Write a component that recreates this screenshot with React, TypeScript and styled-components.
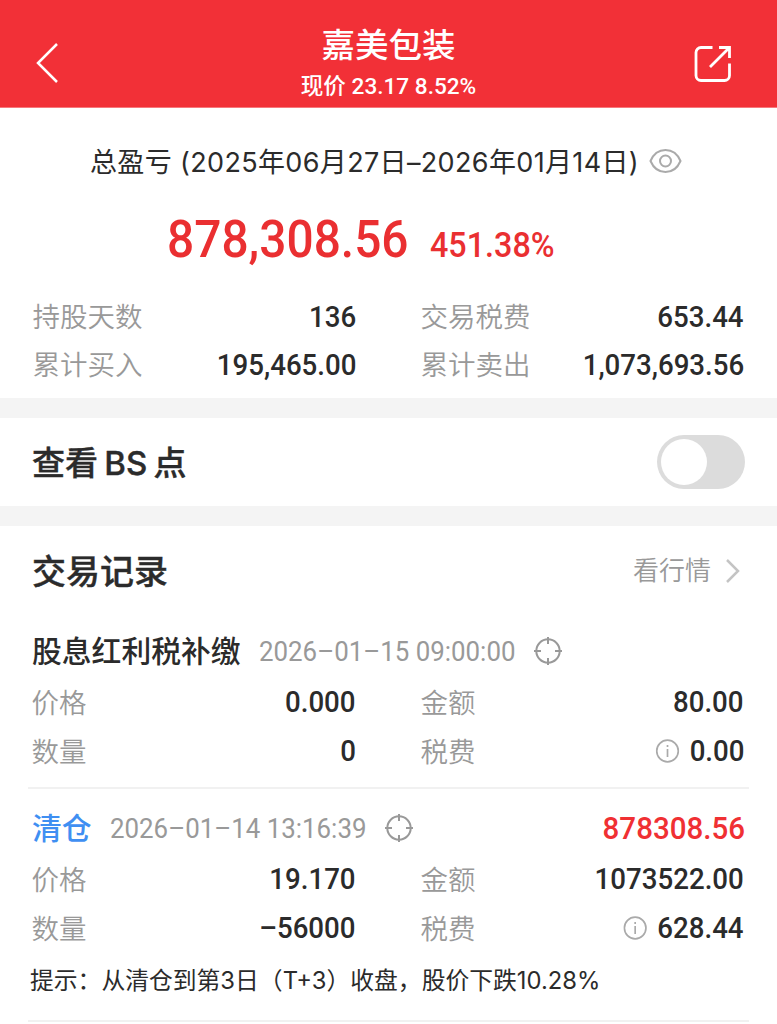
import React from "react";
import styled, { createGlobalStyle } from "styled-components";

const Global = createGlobalStyle`
  * { box-sizing: border-box; }
  body {
    margin: 0;
    background: #fff;
    color: #2b2b2b;
    font-family: Roboto, "Noto Sans CJK SC", sans-serif;
    overflow: hidden;
  }
`;

const Page = styled.main`
  width: 777px;
  height: 1024px;
  overflow: hidden;
  background: #fff;
`;

const Header = styled.header`
  display: flex;
  justify-content: space-between;
  height: 108px;
  padding: 0 43px 0 34px;
  background: #f23037;
  color: #fff;
  border-bottom: 1px solid #f7787c;
`;

const HeaderIcon = styled.svg`
  margin-top: 42px;
  fill: none;
  stroke: #fff;
`;

const Heading = styled.div`
  display: flex;
  flex-direction: column;
  align-items: center;
  padding-top: 21px;
  margin-left: 23px;
`;

const StockName = styled.h1`
  margin: 0;
  font-size: 33.5px;
  line-height: 50px;
  font-weight: 500;
`;

const Quote = styled.div`
  font-size: 22.6px;
  line-height: 32px;
  font-weight: 500;
  white-space: nowrap;
`;

const Summary = styled.section`
  height: 290px;
  padding: 35px 33px 0;
`;

const Period = styled.div`
  display: flex;
  align-items: center;
  height: 35px;
  margin-left: 57px;
  gap: 10px;
  font-family: Inter, "Noto Sans CJK SC", sans-serif;
  font-size: 27px;
  letter-spacing: 0.35px;
  white-space: nowrap;
`;

const Profit = styled.div`
  display: flex;
  align-items: baseline;
  height: 72px;
  margin: 26px 0 16px 134px;
  line-height: 72px;
  color: #ea2f31;
  font-weight: 500;
`;

const ProfitAmount = styled.span`
  font-size: 52px;
  transform: scaleX(0.92);
  transform-origin: left;
`;

const ProfitRate = styled.span`
  font-size: 34.5px;
  transform: scaleX(0.937);
  transform-origin: left;
`;

const Row = styled.div<{ $h: number }>`
  display: grid;
  grid-template-columns: 1fr 323px;
  column-gap: 65px;
  height: ${(p) => p.$h}px;
`;

const Cell = styled.div`
  display: flex;
  justify-content: space-between;
  align-items: center;
`;

const Label = styled.span`
  font-size: 27.5px;
  line-height: 40px;
  padding-top: 4px;
  margin-left: -0.5px;
  color: #999;
  font-weight: 350;
`;

/* Figures are set condensed; the right edge stays fixed. */
const Value = styled.span`
  display: flex;
  align-items: center;
  gap: 11px;
  font-size: 30px;
  font-weight: 500;
  transform: scaleX(0.922);
  transform-origin: right;
`;

const Band = styled.div`
  height: 20px;
  background: #f4f4f4;
`;

const ToggleRow = styled.section`
  display: flex;
  align-items: center;
  justify-content: space-between;
  height: 88px;
  padding: 0 32px 0 32px;
`;

const Title = styled.h2<{ $size: number }>`
  margin: 0;
  padding-top: 2px;
  font-family: Inter, "Noto Sans CJK SC", sans-serif;
  font-size: ${(p) => p.$size}px;
  font-weight: 500;
  line-height: 50px;
  word-spacing: -2.5px;
  -webkit-text-stroke: 0.4px currentColor;
`;

const Toggle = styled.button`
  width: 88px;
  height: 54px;
  padding: 4px;
  border: 0;
  border-radius: 27px;
  background: #dcdcdc;
`;

const Knob = styled.span`
  display: block;
  width: 46px;
  height: 46px;
  border-radius: 50%;
  background: #fff;
`;

const Records = styled.section`
  padding: 0 28px;
`;

const RecordsHead = styled.div`
  display: flex;
  align-items: center;
  justify-content: space-between;
  height: 89px;
  padding: 0 9px 0 4px;
`;

const More = styled.div`
  display: flex;
  align-items: center;
  gap: 14px;
  font-size: 26px;
  line-height: 40px;
  font-weight: 350;
  color: #999;
`;

const Record = styled.article<{ $top: number; $bottom: number }>`
  padding: ${(p) => p.$top}px 5px ${(p) => p.$bottom}px 4px;
  border-bottom: 2px solid #f1f1f1;
`;

const RecordHead = styled.div`
  display: flex;
  align-items: center;
  height: 52px;
`;

const Kind = styled.span<{ $blue?: boolean }>`
  padding-bottom: 4px;
  font-size: 29.8px;
  font-weight: 500;
  color: ${(p) => (p.$blue ? "#3f8ff2" : "#2b2b2b")};
`;

const Stamp = styled.time`
  margin: 0 -2px 0 18px;
  font-size: 28px;
  transform: scaleX(0.924);
  transform-origin: left;
  color: #999;
  white-space: nowrap;
`;

const Gain = styled.span`
  margin: 0 -1px 0 auto;
  font-size: 31.5px;
  font-weight: 500;
  transform: scaleX(0.937);
  transform-origin: right;
  color: #f03033;
`;

const Tip = styled.p`
  margin: 0 0 0 -2px;
  padding-top: 4px;
  font-family: Inter, "Noto Sans CJK SC", sans-serif;
  font-size: 23.8px;
  line-height: 50px;
  white-space: nowrap;
`;

const Eye = () => (
  <svg width="33" height="26" viewBox="0 0 33 26" fill="none" stroke="#aaa" strokeWidth="2">
    <path d="M1.500 13C4.500 6 10 2 16.500 2s12 4 15 11c-3 7-8.500 11-15 11S4.500 20 1.500 13Z" />
    <circle cx="16.500" cy="13" r="5.500" />
  </svg>
);

const Target = () => (
  <svg width="28" height="28" viewBox="0 0 28 28" fill="none" stroke="#999" strokeWidth="2">
    <circle cx="14" cy="14" r="11.700" />
    <path d="M14 0v7M14 21v7M0 14h7M21 14h7" />
  </svg>
);

const Info = () => (
  <svg width="26" height="24" viewBox="0 0 24 24" preserveAspectRatio="none" fill="none" stroke="#aaa" strokeWidth="1.700">
    <circle cx="12" cy="12" r="10.800" />
    <path d="M12 10v8M12 6v2" />
  </svg>
);

type Pair = { label: string; value: string; info?: boolean };

const DataRow = ({ h, cells }: { h: number; cells: Pair[] }) => (
  <Row $h={h}>
    {cells.map(({ label, value, info }) => (
      <Cell key={label}>
        <Label>{label}</Label>
        <Value>
          {info && <Info />}
          <span>{value}</span>
        </Value>
      </Cell>
    ))}
  </Row>
);

export default function App() {
  return (
    <Page>
      <Global />
      <Header>
        <HeaderIcon width="26" height="42" viewBox="0 0 26 42" strokeWidth="2.500">
          <path d="M23 2 4 21l19 19" />
        </HeaderIcon>
        <Heading>
          <StockName>嘉美包装</StockName>
          <Quote>现价 23.17 8.52%</Quote>
        </Heading>
        <HeaderIcon width="40" height="42" viewBox="0 0 40 42" strokeWidth="2.800">
          <path d="M18.500 5.500H7a5 5 0 0 0-5 5v23a5 5 0 0 0 5 5h23.500a5 5 0 0 0 5-5V21.500M25 5.500h10.500V16M35.500 5.500 16 25" />
        </HeaderIcon>
      </Header>
      <Summary>
        <Period>
          <span>总盈亏 (2025年06月27日–2026年01月14日)</span>
          <Eye />
        </Period>
        <Profit>
          <ProfitAmount>878,308.56</ProfitAmount>
          <ProfitRate>451.38%</ProfitRate>
        </Profit>
        <DataRow h={48} cells={[{ label: "持股天数", value: "136" }, { label: "交易税费", value: "653.44" }]} />
        <DataRow h={48} cells={[{ label: "累计买入", value: "195,465.00" }, { label: "累计卖出", value: "1,073,693.56" }]} />
      </Summary>
      <Band />
      <ToggleRow>
        <Title $size={33}>查看 BS 点</Title>
        <Toggle aria-label="查看 BS 点"><Knob /></Toggle>
      </ToggleRow>
      <Band />
      <Records>
        <RecordsHead>
          <Title $size={34}>交易记录</Title>
          <More>
            看行情
            <svg width="15" height="24" viewBox="0 0 15 24" fill="none" stroke="#c4c4c4" strokeWidth="2.500">
              <path d="m2 1 11 11L2 23" />
            </svg>
          </More>
        </RecordsHead>
        <Record $top={10} $bottom={12}>
          <RecordHead>
            <Kind>股息红利税补缴</Kind>
            <Stamp>2026–01–15 09:00:00</Stamp>
            <Target />
          </RecordHead>
          <DataRow h={49} cells={[{ label: "价格", value: "0.000" }, { label: "金额", value: "80.00" }]} />
          <DataRow h={49} cells={[{ label: "数量", value: "0" }, { label: "税费", value: "0.00", info: true }]} />
        </Record>
        <Record $top={13} $bottom={14}>
          <RecordHead>
            <Kind $blue>清仓</Kind>
            <Stamp>2026–01–14 13:16:39</Stamp>
            <Target />
            <Gain>878308.56</Gain>
          </RecordHead>
          <DataRow h={49} cells={[{ label: "价格", value: "19.170" }, { label: "金额", value: "1073522.00" }]} />
          <DataRow h={49} cells={[{ label: "数量", value: "–56000" }, { label: "税费", value: "628.44", info: true }]} />
          <Tip>提示：从清仓到第3日（T+3）收盘，股价下跌10.28%</Tip>
        </Record>
      </Records>
    </Page>
  );
}
